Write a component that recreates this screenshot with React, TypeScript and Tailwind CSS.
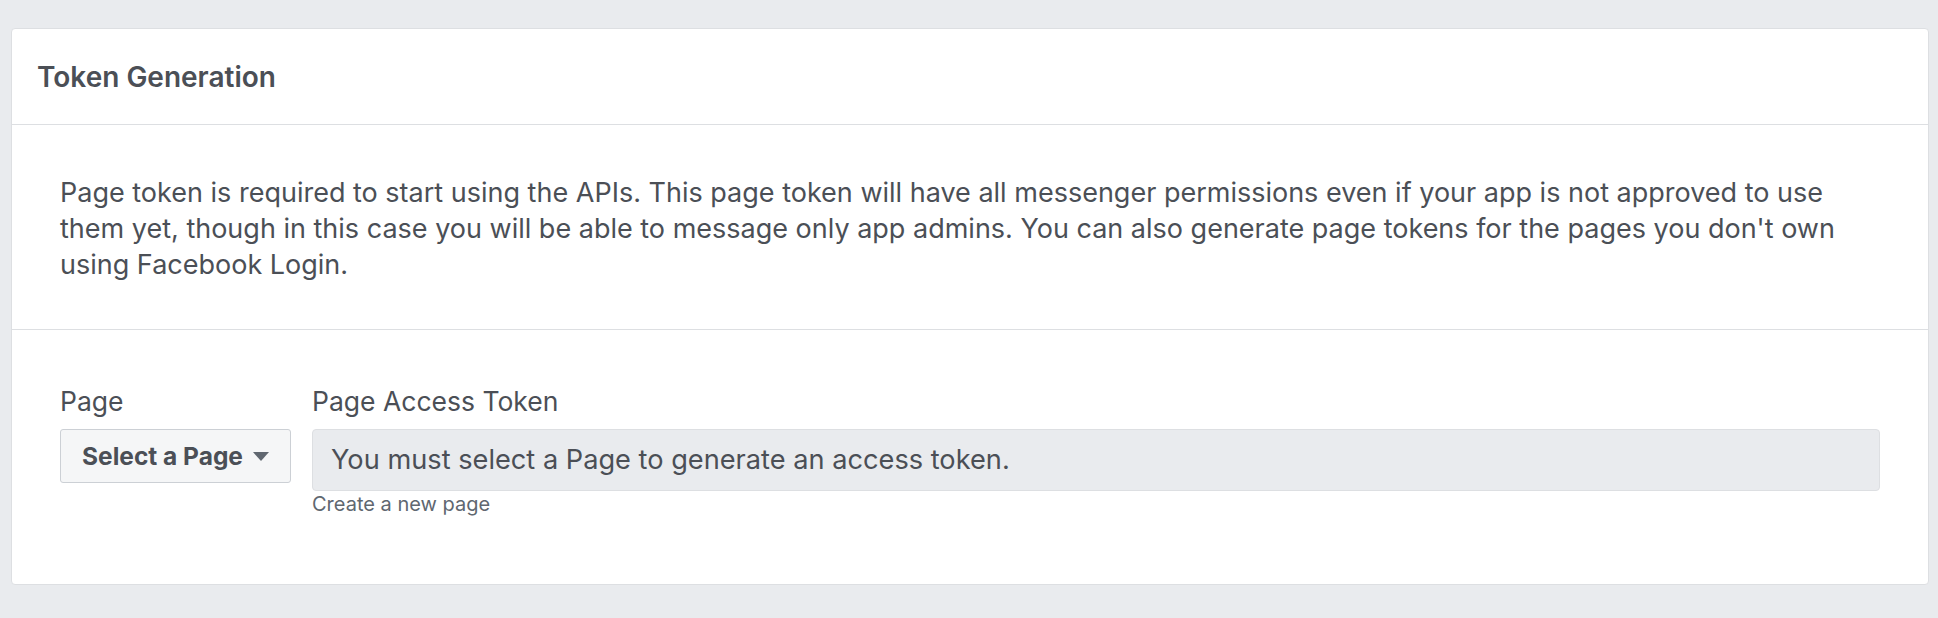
export default function App() {
  return (
    <div className="min-h-[618px] bg-[#e9ebee] pt-[28px] pl-[11px] pr-[9px] pb-[34px] font-['Inter',sans-serif] text-[#4b4f56]">
      <div className="rounded-[4px] border border-[#dddfe2] bg-white">
        <div className="flex h-[96px] items-center border-b border-[#dddfe2] px-[25px]">
          <h2 className="text-[28px] font-semibold">Token Generation</h2>
        </div>
        <div className="border-b border-[#dddfe2] px-[48px] pt-[50px] pb-[47px]">
          <p className="text-[27px] leading-[35.8px]">
            Page token is required to start using the APIs. This page token will have all messenger permissions even if your app is not approved to use them yet, though in this case you will be able to message only app admins. You can also generate page tokens for the pages you don't own using Facebook Login.
          </p>
        </div>
        <div className="flex gap-[21px] px-[48px] pt-[55px] pb-[68px]">
          <div className="flex flex-col">
            <label className="mb-[12px] text-[26.5px] leading-[32px]">Page</label>
            <button className="flex h-[54px] w-[231px] items-center justify-center gap-[10px] rounded-[3px] border border-[#ccd0d5] bg-[#f5f6f7] text-[24.5px] font-bold text-[#4b4f56]">
              Select a Page
              <svg width="16" height="9" viewBox="0 0 16 9" className="fill-[#606770]">
                <path d="M0 0h16L8 9z" />
              </svg>
            </button>
          </div>
          <div className="flex flex-1 flex-col">
            <label className="mb-[12px] text-[26.5px] leading-[32px]">Page Access Token</label>
            <div className="flex h-[62px] items-center rounded-[4px] border border-[#dddfe2] bg-[#e9ebee] px-[18px] text-[27.2px] text-[#4b4f56]">
              You must select a Page to generate an access token.
            </div>
            <a className="mt-[1px] text-[20px] leading-[24px] text-[#606770]">Create a new page</a>
          </div>
        </div>
      </div>
    </div>
  );
}
